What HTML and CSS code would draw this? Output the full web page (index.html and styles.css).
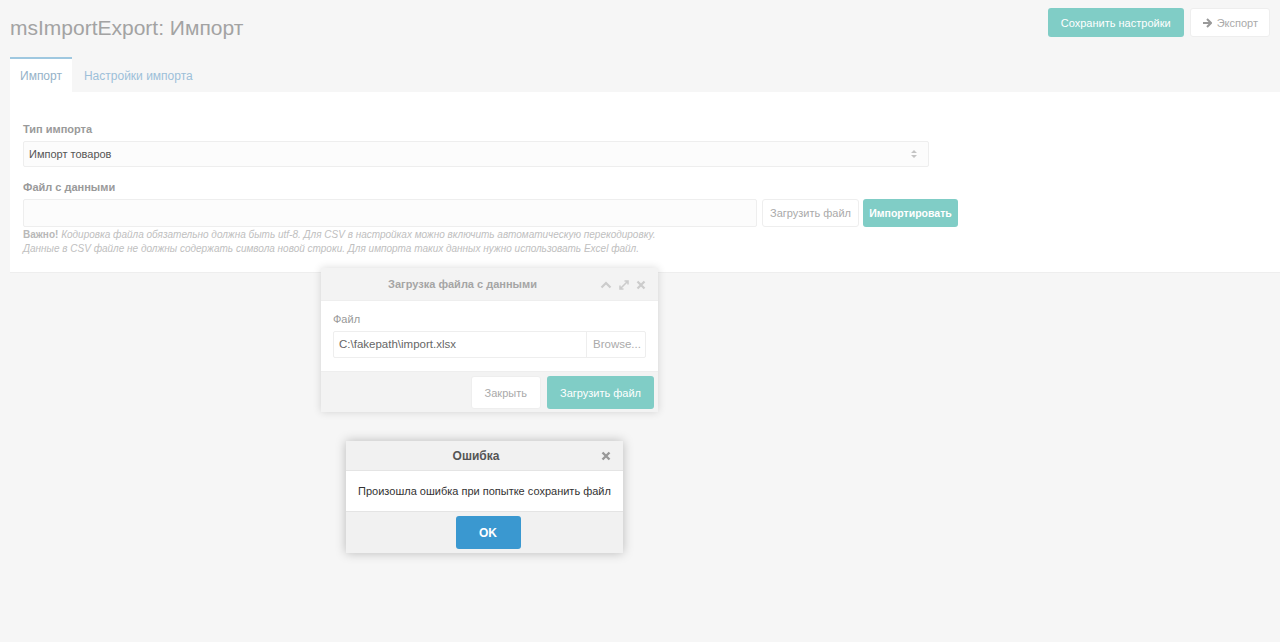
FILE: index.html
```html
<!DOCTYPE html>
<html lang="ru">
<head>
    <meta charset="UTF-8">
    <title>msImportExport: Импорт</title>
    <link rel="stylesheet" href="styles.css">
</head>
<body>
    <div class="header">
        <h1 class="title">msImportExport: Импорт</h1>
        <div class="actions">
            <button class="btn primary">Сохранить настройки</button>
            <button class="btn light export">
                <svg class="arrow" width="10" height="10" viewBox="0 0 10 10"><path d="M5 1 L9 5 L5 9 M8.5 5 H1" fill="none" stroke="#999" stroke-width="2"/></svg>
                Экспорт
            </button>
        </div>
    </div>

    <div class="tabs">
        <div class="tab active">Импорт</div>
        <div class="tab">Настройки импорта</div>
    </div>

    <div class="panel">
        <label class="label">Тип импорта</label>
        <div class="select">
            <span>Импорт товаров</span>
            <svg width="8" height="10" viewBox="0 0 8 10"><path d="M1 4 L4 1 L7 4 Z M1 6 L4 9 L7 6 Z" fill="#c4c4c4"/></svg>
        </div>

        <label class="label">Файл с данными</label>
        <div class="file-row">
            <div class="input wide"></div>
            <button class="btn light small">Загрузить файл</button>
            <button class="btn primary small bold">Импортировать</button>
        </div>
        <p class="help"><b>Важно!</b> <i>Кодировка файла обязательно должна быть utf-8. Для CSV в настройках можно включить автоматическую перекодировку.</i><br>
        <i>Данные в CSV файле не должны содержать символа новой строки. Для импорта таких данных нужно использовать Excel файл.</i></p>
    </div>

    <!-- окно загрузки -->
    <div class="window upload">
        <div class="win-head">
            <span>Загрузка файла с данными</span>
            <div class="tools">
                <svg width="12" height="10" viewBox="0 0 12 10"><path d="M1.5 7.5 L6 3 L10.5 7.5" fill="none" stroke="#ccc" stroke-width="2.2"/></svg>
                <svg width="12" height="12" viewBox="0 0 12 12"><path d="M2 10 L10 2 M6.5 2 H10 V5.5 M2 6.5 V10 H5.5" fill="none" stroke="#ccc" stroke-width="1.6"/></svg>
                <svg width="10" height="10" viewBox="0 0 10 10"><path d="M1.5 1.5 L8.5 8.5 M8.5 1.5 L1.5 8.5" stroke="#ccc" stroke-width="2.2"/></svg>
            </div>
        </div>
        <div class="win-body">
            <label class="label thin">Файл</label>
            <div class="input browse">
                <span class="path">C:\fakepath\import.xlsx</span>
                <span class="browse-btn">Browse...</span>
            </div>
        </div>
        <div class="win-foot">
            <button class="btn light big">Закрыть</button>
            <button class="btn primary big">Загрузить файл</button>
        </div>
    </div>

    <!-- окно ошибки -->
    <div class="window error">
        <div class="win-head dark">
            <span>Ошибка</span>
            <svg class="close" width="10" height="10" viewBox="0 0 10 10"><path d="M1.5 1.5 L8.5 8.5 M8.5 1.5 L1.5 8.5" stroke="#999" stroke-width="2.4"/></svg>
        </div>
        <div class="win-body msg">Произошла ошибка при попытке сохранить файл</div>
        <div class="win-foot center">
            <button class="btn ok">OK</button>
        </div>
    </div>
</body>
</html>
```

FILE: styles.css
```css
body { margin: 0; background-color: #f6f6f6; font-family: "Liberation Sans", Arial, sans-serif; color: #555; }

/* ШАПКА */
.header { display: flex; justify-content: space-between; align-items: flex-start; padding: 0 10px; height: 57px; }
.title { margin: 16px 0 0; font-size: 21px; font-weight: normal; color: #a3a3a3; }
.actions { display: flex; gap: 6px; margin-top: 8px; }

/* КНОПКИ */
.btn { font-family: inherit; font-size: 11px; border: none; border-radius: 3px; cursor: pointer; padding: 0 13px; height: 29px; }
.btn.primary { background-color: #80cdc6; color: #fff; }
.btn.light { background-color: #fff; color: #aaa; border: 1px solid #eee; }
.btn.export { padding: 0 11px; }
.btn.small { height: 28px; padding: 0; width: 97px; font-size: 11px; }
.btn.primary.small { width: 95px; font-size: 10.5px; }
.btn.bold { font-weight: bold; }
.btn.big { height: 33px; padding: 0 13px; font-size: 11px; }
.btn.ok { background-color: #3a98d0; color: #fff; font-weight: bold; width: 65px; height: 33px; font-size: 12px; margin-left: 7px; }
.arrow { margin-right: 2px; vertical-align: -1px; }

/* ВКЛАДКИ */
.tabs { display: flex; padding-left: 10px; height: 35px; }
.tab { padding: 0 12px; font-size: 12px; color: #9dc0d9; line-height: 39px; }
.tab.active { background-color: #fff; color: #95b2c8; border-top: 2px solid #9fc8e0; line-height: 35px; height: 33px; padding: 0 10px; }

/* ПАНЕЛЬ */
.panel { background-color: #fff; margin-left: 10px; padding: 31px 13px 16px; border-bottom: 1px solid #eee; }
.label { display: block; font-size: 11px; font-weight: bold; color: #9a9a9a; margin-bottom: 6px; }
.label.thin { font-weight: normal; color: #999; }
.select { display: flex; justify-content: space-between; align-items: center; width: 889px; height: 24px; padding: 0 10px 0 5px; border: 1px solid #eee; border-radius: 2px; background-color: #fcfcfc; font-size: 11px; color: #555; margin-bottom: 14px; }
.file-row { display: flex; gap: 5px; align-items: center; }
.file-row .btn.primary { margin-left: -1px; }
.input { height: 25px; border: 1px solid #eee; border-radius: 2px; background-color: #fcfcfc; box-sizing: border-box; }
.input.wide { width: 734px; height: 28px; }
.help { margin: 1px 0 0; font-size: 10px; line-height: 14px; color: #c0c0c0; }
.help b { color: #b8b8b8; }

/* ОКНА */
.window { position: absolute; background-color: #fff; box-shadow: 0 0 8px rgba(0, 0, 0, 0.15); }
.window.upload { left: 321px; top: 268px; width: 337px; }
.window.error { left: 346px; top: 441px; width: 277px; box-shadow: 0 0 10px rgba(0, 0, 0, 0.25); }
.win-head { position: relative; height: 32px; background-color: #f3f3f3; display: flex; align-items: center; justify-content: center; padding-right: 54px; font-size: 11px; font-weight: bold; color: #a5a5a5; border-bottom: 1px solid #eee; }
.win-head.dark { height: 29px; padding-right: 17px; background-color: #f1f1f1; color: #555; font-size: 12px; border-bottom: 1px solid #e4e4e4; }
.tools { position: absolute; right: 12px; top: 11px; display: flex; gap: 6px; align-items: center; }
.close { position: absolute; right: 12px; top: 10px; }
.win-body { padding: 12px 12px 13px; }
.win-body.msg { padding: 0; height: 40px; line-height: 40px; text-align: center; font-size: 11px; color: #333; }
.browse { display: flex; height: 27px; background-color: #fff; font-size: 11.5px; }
.path { flex: 1; padding-left: 5px; line-height: 25px; color: #666; }
.browse-btn { width: 52px; border-left: 1px solid #eee; line-height: 25px; padding-left: 6px; color: #aaa; }
.win-foot { display: flex; justify-content: flex-end; gap: 6px; padding: 4px 4px 3px; background-color: #f3f3f3; border-top: 1px solid #eee; }
.win-foot.center { justify-content: center; padding: 4px 0 4px; background-color: #f1f1f1; border-top: 1px solid #e4e4e4; }
```
